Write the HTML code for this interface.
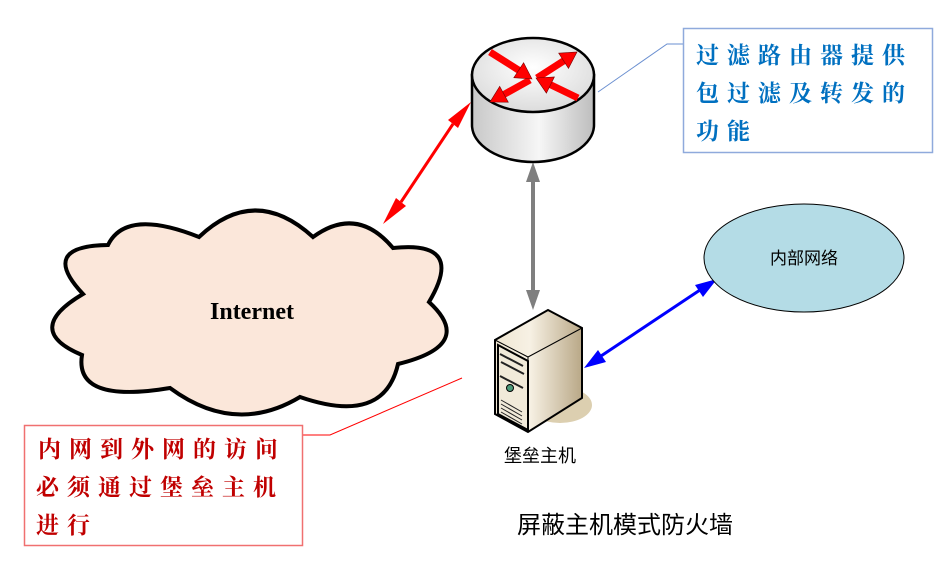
<!DOCTYPE html>
<html><head><meta charset="utf-8"><style>
html,body{margin:0;padding:0;background:#fff;width:952px;height:562px;overflow:hidden}
svg{display:block}
.cj{font-family:"Liberation Serif","Noto Serif CJK SC",serif;font-weight:bold;font-size:23px;letter-spacing:8px}
</style></head><body>
<svg width="952" height="562" viewBox="0 0 952 562" xmlns="http://www.w3.org/2000/svg">
<defs>
<linearGradient id="cyl" x1="0" x2="1"><stop offset="0" stop-color="#c8c8c8"/><stop offset="0.55" stop-color="#f6f6f6"/><stop offset="1" stop-color="#bdbdbd"/></linearGradient>
<radialGradient id="top" cx="0.5" cy="0.4" r="0.7"><stop offset="0" stop-color="#fff"/><stop offset="1" stop-color="#d6d6d6"/></radialGradient>
<linearGradient id="srv" x1="0" x2="1"><stop offset="0" stop-color="#efe6d2"/><stop offset="0.4" stop-color="#f7f1e4"/><stop offset="1" stop-color="#b9a887"/></linearGradient>
</defs>

<!-- cloud -->
<path d="M199,237 Q255,184 313,237 Q357,205 393,248 Q466,240 429,302 Q476,345 398,364 Q384,426 300,397 Q235,436 170,388 Q74,404 82,355 Q22,330 83,294 Q38,246 108,245 Q126,208 199,237 Z" fill="#fbe7da" stroke="#000" stroke-width="4"/>
<text x="252" y="319" text-anchor="middle" font-family="Liberation Serif,serif" font-weight="bold" font-size="24">Internet</text>

<!-- red arrow -->
<path d="M471,102 L458,128 L448,120 Z" fill="#f00"/>
<path d="M383,224 L396,198 L406,206 Z" fill="#f00"/>
<line x1="453" y1="124" x2="401" y2="202" stroke="#f00" stroke-width="3"/>

<!-- gray arrow -->
<line x1="533" y1="180" x2="533" y2="292" stroke="#7f7f7f" stroke-width="4"/>
<path d="M533,162 L526,182 L540,182 Z" fill="#7f7f7f"/>
<path d="M533,310 L526,290 L540,290 Z" fill="#7f7f7f"/>

<!-- blue arrow -->
<line x1="598" y1="358" x2="703" y2="288" stroke="#00f" stroke-width="3"/>
<path d="M584,368 L598,350 L606,362 Z" fill="#00f"/>
<path d="M717,279 L703,297 L695,285 Z" fill="#00f"/>

<!-- router -->
<path d="M472,75 L472,125 A61,37 0 0 0 594,125 L594,75 Z" fill="url(#cyl)" stroke="#000" stroke-width="2.5"/>
<ellipse cx="533" cy="75" rx="61" ry="37" fill="url(#top)" stroke="#000" stroke-width="2.5"/>
<g stroke="#f00" stroke-width="7">
<line x1="490" y1="52" x2="520" y2="71"/>
<line x1="537" y1="78" x2="565" y2="60"/>
<line x1="530" y1="80" x2="503" y2="95"/>
<line x1="578" y1="98" x2="549" y2="84"/>
</g>
<g fill="#f00" stroke="#700" stroke-width="0.6">
<path d="M532,79 L513.8,77.7 L523.6,62.7 Z"/>
<path d="M577,52 L568.5,68.4 L558.7,53.2 Z"/>
<path d="M490,102 L508.3,102.2 L499.7,86.4 Z"/>
<path d="M536,78 L554.4,76.9 L546.4,93.1 Z"/>
</g>

<!-- callout blue -->
<polyline points="598,92 667,44 683,44" fill="none" stroke="#6a8fd0" stroke-width="1"/>
<rect x="683.5" y="28.5" width="249" height="124" fill="#fff" stroke="#8faadc" stroke-width="1.5"/>
<g class="cj" fill="#0070c0">
<text x="696" y="63">过滤路由器提供</text>
<text x="696" y="101">包过滤及转发的</text>
<text x="696" y="139">功能</text>
</g>

<!-- internal network -->
<ellipse cx="804" cy="258" rx="100" ry="54" fill="#b4dce6" stroke="#000" stroke-width="1"/>
<text x="804" y="264" text-anchor="middle" font-family="Liberation Sans,'Noto Sans CJK SC',sans-serif" font-size="17">内部网络</text>

<!-- server -->
<ellipse cx="560" cy="405" rx="32" ry="18" fill="#dccfb0"/>
<path d="M495,340 L548,310 L582,328 L582,398 L528,432 L495,414 Z" fill="url(#srv)" stroke="#000" stroke-width="2"/>
<path d="M495,340 L528,357 L582,328 M528,357 L528,432" fill="none" stroke="#000" stroke-width="1"/>
<path d="M498,345 L528,361 L528,430 L498,414 Z" fill="#f1ead9"/>
<path d="M498,345 L528,361 L528,430 L498,414 Z" fill="none" stroke="#000" stroke-width="2"/>
<path d="M500,354 L523,366 M501,362 L524,374 M500,376 L523,388" stroke="#222" stroke-width="2"/>
<circle cx="510" cy="388" r="3.5" fill="#4c9a7a" stroke="#000" stroke-width="1"/>
<path d="M501,400 L522,412 M501,404 L522,416 M501,408 L522,420 M501,412 L522,424" stroke="#222" stroke-width="1"/>
<text x="540" y="462" text-anchor="middle" font-family="Liberation Sans,'Noto Sans CJK SC',sans-serif" font-size="18">堡垒主机</text>

<!-- callout red -->
<polyline points="303,435 330,435 462,378" fill="none" stroke="#f00" stroke-width="1"/>
<rect x="24.5" y="425.5" width="278" height="120" fill="#fff" stroke="#f07070" stroke-width="1.5"/>
<g class="cj" fill="#c00000">
<text x="38" y="457">内网到外网的访问</text>
<text x="36" y="495">必须通过堡垒主机</text>
<text x="36" y="533">进行</text>
</g>

<text x="625" y="533" text-anchor="middle" font-family="Liberation Sans,'Noto Sans CJK SC',sans-serif" font-size="24">屏蔽主机模式防火墙</text>
</svg>
</body></html>
